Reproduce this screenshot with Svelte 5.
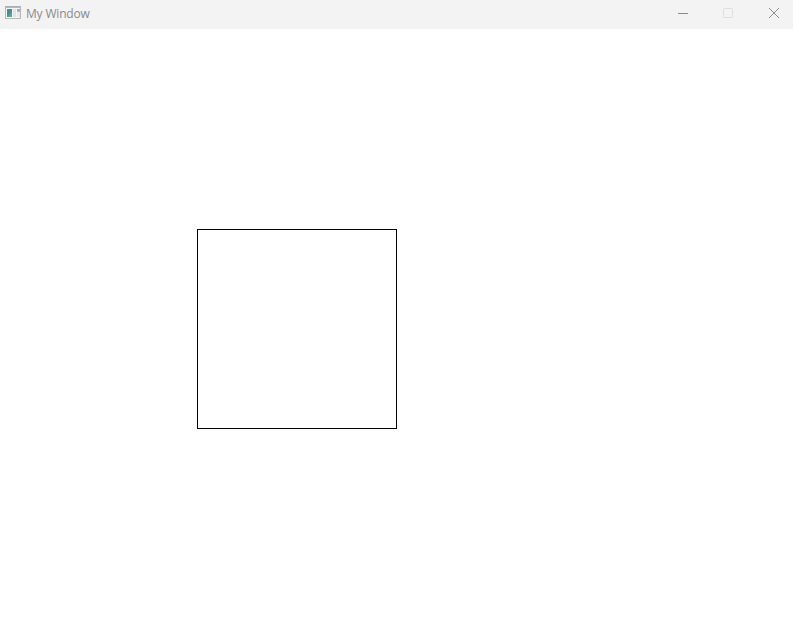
<script>
  const title = 'My Window';
</script>

<div class="window">
  <header>
    <svg class="app-icon" width="16" height="13" viewBox="0 0 16 13">
      <defs>
        <linearGradient id="pane" x1="0" y1="0" x2="0.6" y2="1">
          <stop offset="0" stop-color="#5a87ac" />
          <stop offset="0.5" stop-color="#468a98" />
          <stop offset="1" stop-color="#65ac88" />
        </linearGradient>
      </defs>
      <rect width="16" height="13" fill="#b5b8b9" />
      <rect width="16" height="1" fill="#a9afb3" />
      <rect x="1" y="2" width="14" height="10" fill="#f6f6f6" />
      <rect x="2" y="3" width="5" height="8" fill="url(#pane)" />
      <rect x="8" y="3" width="3" height="8" fill="#e1e3e3" />
      <rect x="12" y="3" width="3" height="2" fill="#8fb0bf" />
      <rect x="12" y="5" width="3" height="1" fill="#a3c7b5" />
      <rect x="12" y="6" width="3" height="5" fill="#e7e9e8" />
    </svg>
    <span class="title">{title}</span>
    <div class="controls">
      <svg width="46" height="28" viewBox="0 0 46 28"><path d="M19 13.5h10" stroke="#8a8a8a" /></svg>
      <svg width="46" height="28" viewBox="0 0 46 28"><rect x="18.5" y="8.5" width="9" height="9" rx="0.8" fill="none" stroke="#dedede" /></svg>
      <svg width="46" height="28" viewBox="0 0 46 28"><path d="M18 8l10 10M28 8l-10 10" stroke="#8e8e8e" /></svg>
    </div>
  </header>
  <main><div class="square"></div></main>
</div>

<style>
  :global(body) { margin: 0; background: #fff; }
  .window { width: 793px; height: 625px; overflow: hidden; display: flex; flex-direction: column; background: #fff; }
  header { height: 29px; flex: none; display: flex; align-items: flex-start; box-sizing: border-box; padding-left: 5px; background: #f3f3f3; }
  .app-icon { margin-top: 6px; flex: none; }
  .title { margin-left: 5px; line-height: 28px; font-family: "Open Sans", "Noto Sans", sans-serif; font-size: 12px; letter-spacing: -0.18px; color: #8a8a8a; white-space: nowrap; }
  .controls { display: flex; margin-left: auto; margin-right: -4px; }
  .controls svg { display: block; }
  main { flex: 1; padding: 200px 0 0 197px; box-sizing: border-box; }
  .square { width: 200px; height: 200px; box-sizing: border-box; border: 1px solid #000; }
</style>
